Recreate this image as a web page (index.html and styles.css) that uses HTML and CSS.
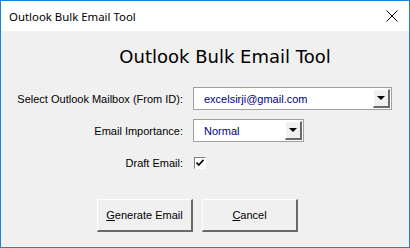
FILE: index.html
```html
<!DOCTYPE html>
<html lang="en">
<head>
    <meta charset="UTF-8">
    <title>Outlook Bulk Email Tool</title>
    <link rel="stylesheet" href="styles.css">
</head>
<body>
    <div class="window">
        <div class="title-bar">
            <span class="title-text">Outlook Bulk Email Tool</span>
            <svg class="close-icon" width="12" height="12" viewBox="0 0 12 12">
                <path d="M0.5 0.5 L11.5 11.5 M11.5 0.5 L0.5 11.5" stroke="#000" stroke-width="1"/>
            </svg>
        </div>

        <div class="content">
            <h1 class="heading">Outlook Bulk Email Tool</h1>

            <div class="form-grid">
                <label class="field-label">Select Outlook Mailbox (From ID):</label>
                <div class="combo combo-wide">
                    <span class="combo-text">excelsirji@gmail.com</span>
                    <span class="combo-btn"><span class="arrow"></span></span>
                </div>

                <label class="field-label">Email Importance:</label>
                <div class="combo combo-short">
                    <span class="combo-text">Normal</span>
                    <span class="combo-btn"><span class="arrow"></span></span>
                </div>

                <label class="field-label">Draft Email:</label>
                <div class="check-cell">
                    <span class="checkbox">
                        <svg width="8" height="8" viewBox="0 0 8 8">
                            <path d="M0.5 3.5 L2.8 6 L7.5 0.8" stroke="#000" stroke-width="1.6" fill="none"/>
                        </svg>
                    </span>
                </div>
            </div>

            <div class="button-row">
                <button class="win-btn"><u>G</u>enerate Email</button>
                <button class="win-btn"><u>C</u>ancel</button>
            </div>
        </div>
    </div>
</body>
</html>
```

FILE: styles.css
```css
/* khung cửa sổ */
body {
    margin: 0;
    font-family: "Liberation Sans", sans-serif;
    background: #f0f0f0;
}

.window {
    width: 410px;
    height: 248px;
    box-sizing: border-box;
    border: 1px solid #1883d7;
    background: #f0f0f0;
    display: flex;
    flex-direction: column;
}

.title-bar {
    height: 30px;
    background: #ffffff;
    display: flex;
    align-items: center;
    justify-content: space-between;
    padding: 0 11px 0 8px;
    flex-shrink: 0;
}

.title-text {
    font-family: "Noto Sans", sans-serif;
    font-size: 11.4px;
    color: #000;
}

.close-icon {
    display: block;
}

.content {
    flex: 1;
    display: flex;
    flex-direction: column;
}

.heading {
    margin: 14px 0 0 0;
    padding-left: 40px;
    height: 24px;
    line-height: 24px;
    text-align: center;
    font-family: "DejaVu Sans", sans-serif;
    font-weight: normal;
    font-size: 18px;
    color: #000;
}

.form-grid {
    margin-top: 18px;
    display: grid;
    grid-template-columns: 182px auto;
    grid-auto-rows: 23px;
    column-gap: 10px;
    row-gap: 9px;
}

.field-label {
    font-size: 11px;
    color: #000;
    text-align: right;
    display: flex;
    align-items: center;
    justify-content: flex-end;
}

.combo {
    box-sizing: border-box;
    height: 23px;
    background: #ffffff;
    border: 1px solid #a0a0a0;
    display: flex;
    align-items: stretch;
}

.combo-wide {
    width: 199px;
}

.combo-short {
    width: 111px;
}

.combo-text {
    flex: 1;
    padding-left: 10px;
    font-size: 11px;
    color: #000080;
    display: flex;
    align-items: center;
}

.combo-btn {
    width: 17px;
    margin: 1px;
    box-sizing: border-box;
    background: #f0f0f0;
    border-top: 1px solid #ffffff;
    border-left: 1px solid #ffffff;
    border-right: 2px solid #696969;
    border-bottom: 2px solid #696969;
    display: flex;
    align-items: center;
    justify-content: center;
}

.arrow {
    width: 0;
    height: 0;
    border-left: 4px solid transparent;
    border-right: 4px solid transparent;
    border-top: 4px solid #000;
}

.check-cell {
    display: flex;
    align-items: center;
    padding-left: 1px;
}

.checkbox {
    box-sizing: border-box;
    width: 12px;
    height: 12px;
    background: #ffffff;
    border-top: 1px solid #808080;
    border-left: 1px solid #808080;
    border-right: 1px solid #ffffff;
    border-bottom: 1px solid #ffffff;
    display: flex;
    align-items: center;
    justify-content: center;
}

.button-row {
    margin-top: 25px;
    padding-left: 96px;
    display: flex;
    gap: 9px;
}

.win-btn {
    box-sizing: border-box;
    width: 96px;
    height: 33px;
    padding: 0;
    background: #f0f0f0;
    border-top: 1px solid #ffffff;
    border-left: 1px solid #ffffff;
    border-right: 2px solid #696969;
    border-bottom: 2px solid #696969;
    font-family: "Liberation Sans", sans-serif;
    font-size: 11px;
    color: #000;
}
```
